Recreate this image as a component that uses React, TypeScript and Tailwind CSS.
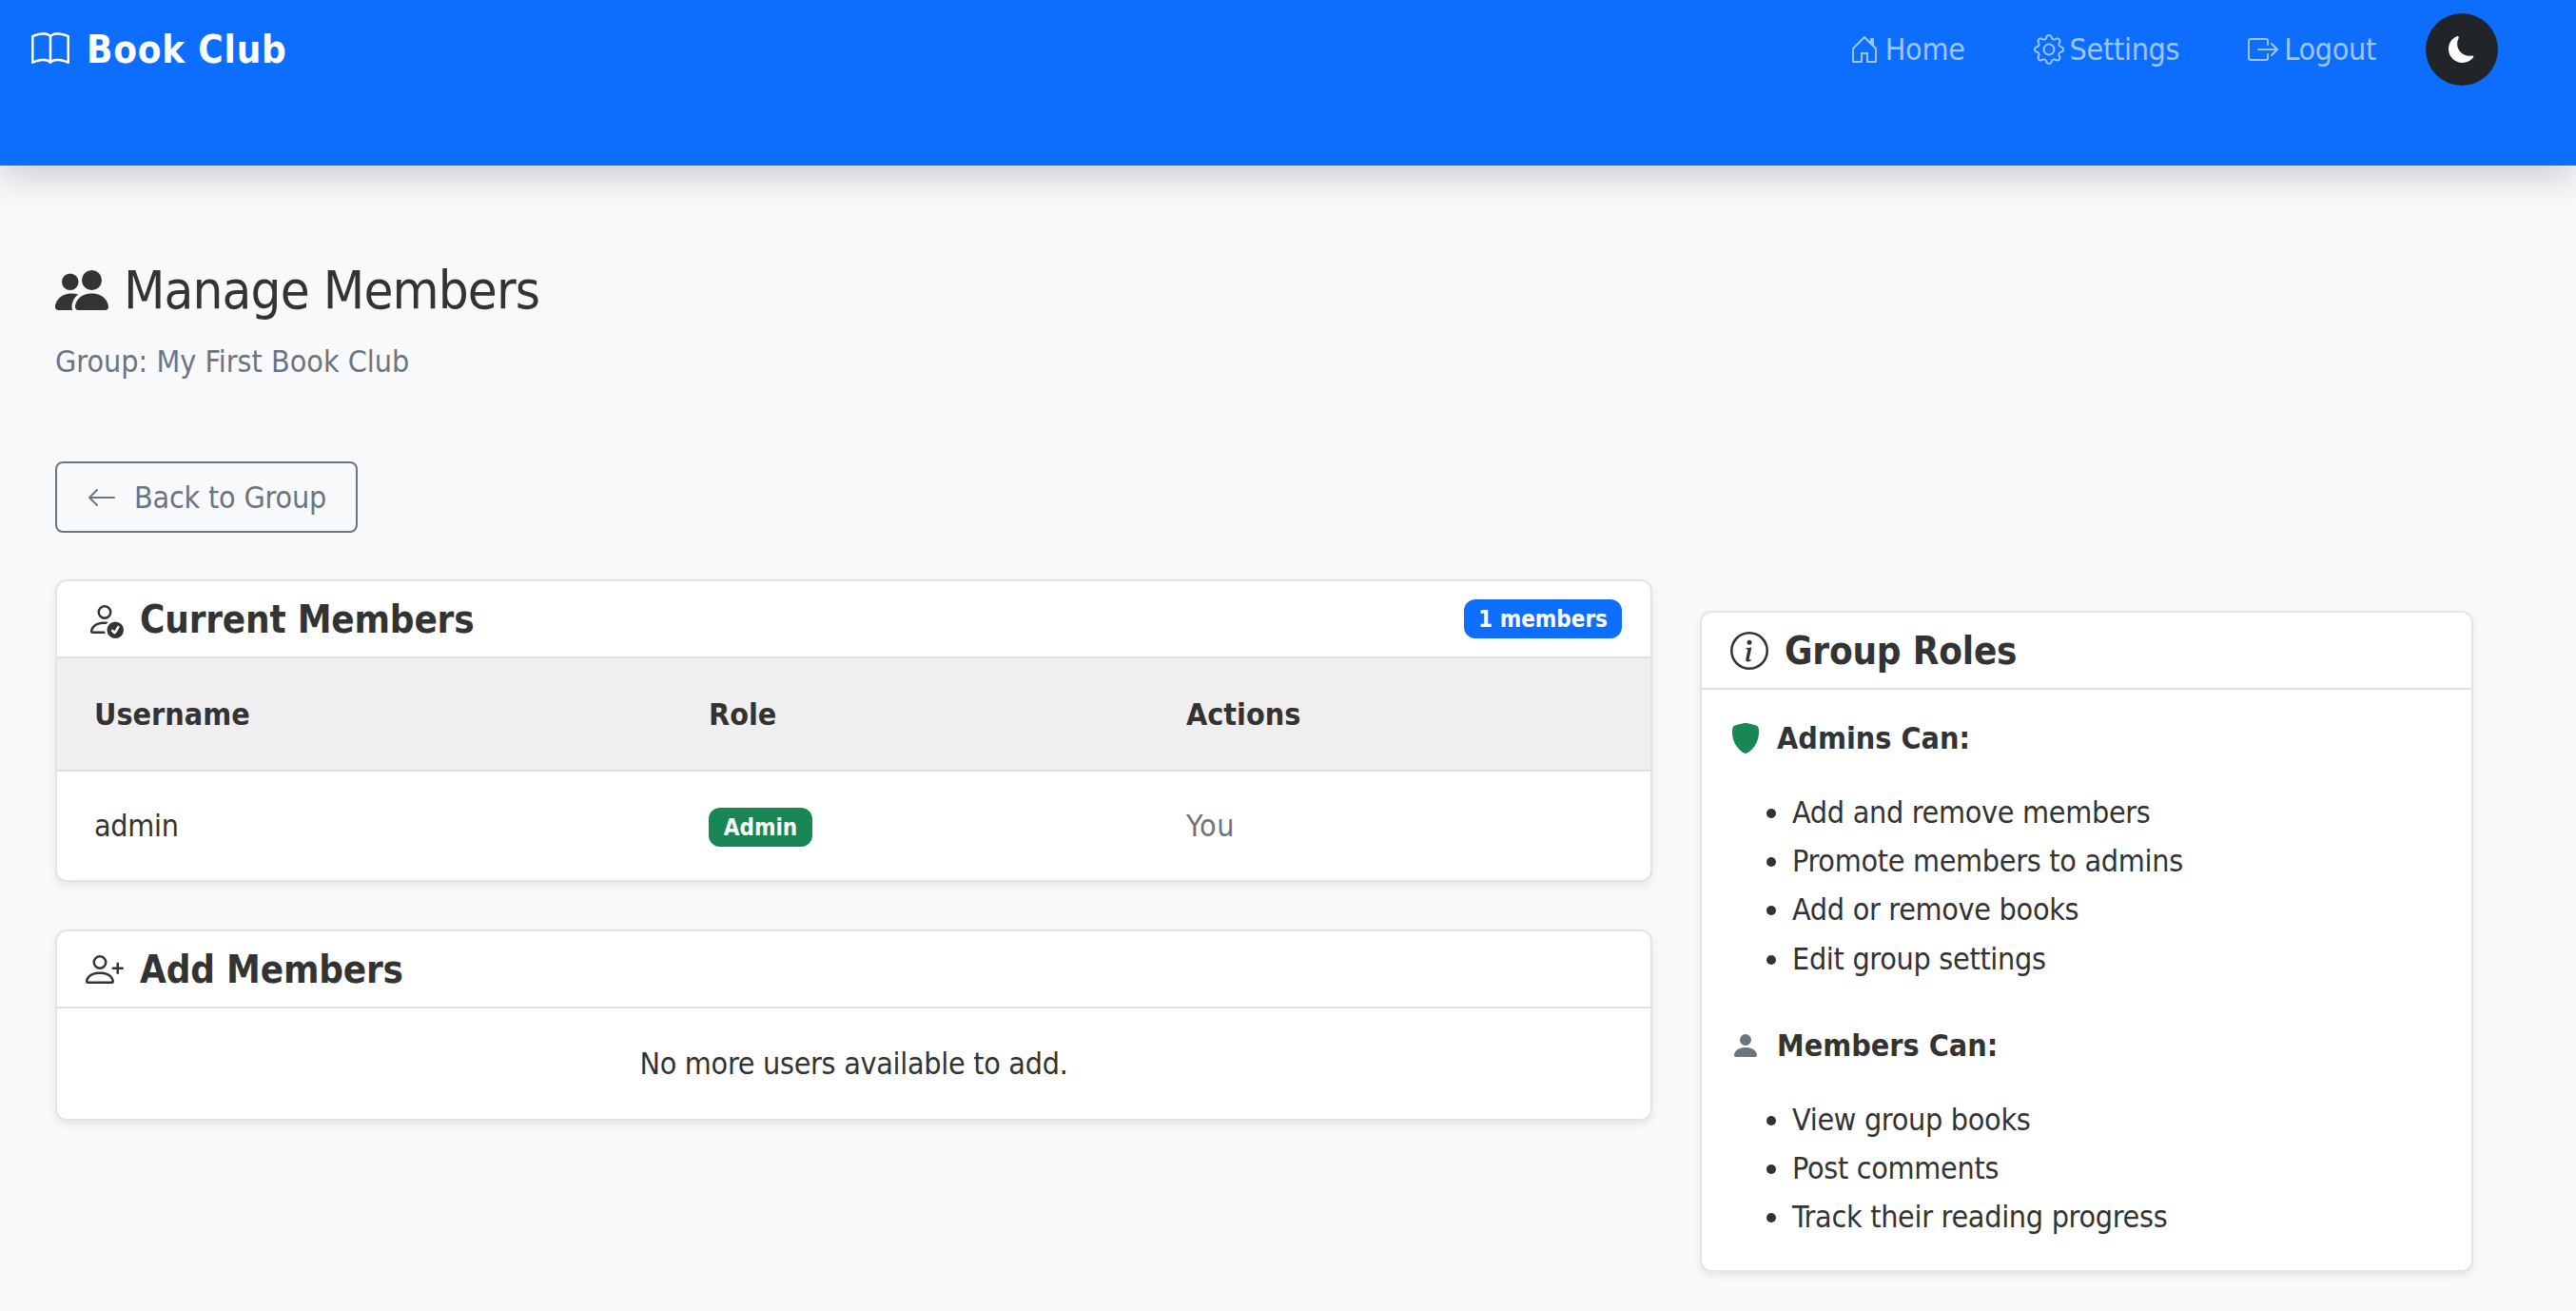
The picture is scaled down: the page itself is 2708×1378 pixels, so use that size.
import { BsArrowLeft, BsBook, BsBoxArrowRight, BsGear, BsHouseDoor, BsInfoCircle, BsMoonFill, BsPeopleFill, BsPersonCheck, BsPersonFill, BsPersonPlus, BsShieldFill } from 'react-icons/bs';
import type { ReactNode } from 'react';

const FONT = "font-['DejaVu_Sans','Liberation_Sans',sans-serif] [font-stretch:condensed]";

const NAV_LINKS = [
  { label: 'Home', icon: <BsHouseDoor className="size-[32px]" /> },
  { label: 'Settings', icon: <BsGear className="size-[32px]" /> },
  { label: 'Logout', icon: <BsBoxArrowRight className="size-[32px]" /> },
];

const ADMIN_RIGHTS = ['Add and remove members', 'Promote members to admins', 'Add or remove books', 'Edit group settings'];
const MEMBER_RIGHTS = ['View group books', 'Post comments', 'Track their reading progress'];

function Card({ icon, title, badge, children }: { icon: ReactNode; title: string; badge?: string; children: ReactNode }) {
  return (
    <div className="overflow-hidden rounded-[12px] border-2 border-[#e3e4e5] bg-white shadow-[0_4px_8px_rgba(0,0,0,0.075)]">
      <div className="flex h-[81px] items-center justify-between border-b-2 border-[#dfe0e1] px-[30px]">
        <div className="flex items-center gap-[17px]">
          {icon}
          <h5 className="text-[40px] font-bold leading-none tracking-[-0.2px] text-[#333]">{title}</h5>
        </div>
        {badge && (
          <span className="flex h-[41px] w-[166px] items-center justify-center rounded-[12px] bg-[#0d6efd] text-[24px] font-bold text-white">{badge}</span>
        )}
      </div>
      {children}
    </div>
  );
}

function RoleList({ items }: { items: string[] }) {
  return (
    <ul className="list-disc pl-[65px] text-[32px] leading-[51.2px] tracking-[-0.3px] text-[#333] marker:text-[#333]">
      {items.map((item) => (
        <li key={item}>{item}</li>
      ))}
    </ul>
  );
}

export default function App() {
  return (
    <div className={`${FONT} min-h-[1378px] bg-[#f8f9fa] text-[#333]`}>
      <nav className="flex h-[174px] items-start justify-between bg-[#0d6efd] pl-[33px] pr-[82px] pt-[14px] shadow-[0_16px_32px_rgba(0,0,0,0.15)]">
        <div className="flex h-[76px] items-center gap-[18px] text-white">
          <BsBook className="size-[40px]" />
          <span className="text-[40px] font-bold leading-none tracking-[0.8px]">Book Club</span>
        </div>
        <div className="flex items-center gap-[52px]">
          <div className="flex items-center gap-[72px] text-[32px] tracking-[-0.3px] text-[#9ec5fe]">
            {NAV_LINKS.map((link) => (
              <a key={link.label} className="flex items-center gap-[6px]">
                {link.icon}
                {link.label}
              </a>
            ))}
          </div>
          <button className="flex size-[76px] items-center justify-center rounded-full bg-[#212529] text-white">
            <BsMoonFill className="size-[28px]" />
          </button>
        </div>
      </nav>

      <main className="px-[58px] pt-[96px]">
        <h1 className="flex h-[70px] items-center gap-[16px] text-[56px] font-normal leading-none tracking-[-0.9px] text-[#333]">
          <BsPeopleFill className="size-[56px]" />
          Manage Members
        </h1>
        <p className="mt-[15px] text-[32px] leading-[51px] text-[#6c757d]">Group: My First Book Club</p>

        <a className="mt-[79px] flex h-[75px] w-[318px] items-center justify-center gap-[18px] rounded-[8px] border-2 border-[#6c757d] text-[32px] tracking-[-0.2px] text-[#6c757d]">
          <BsArrowLeft className="size-[32px]" />
          Back to Group
        </a>

        <div className="mt-[49px] grid grid-cols-[1679px_813px] gap-[50px]">
          <div className="flex flex-col gap-[50px]">
            <Card icon={<BsPersonCheck className="size-[40px]" />} title="Current Members" badge="1 members">
              <table className="w-full table-fixed text-left text-[32px]">
                <thead>
                  <tr className="h-[118px] border-b-2 border-[#dee2e6] bg-[#efefef]">
                    <th className="w-[645px] pl-[39px] font-bold">Username</th>
                    <th className="w-[502px] pl-[40px] font-bold">Role</th>
                    <th className="pl-[40px] font-bold">Actions</th>
                  </tr>
                </thead>
                <tbody>
                  <tr className="h-[115px]">
                    <td className="pl-[39px] tracking-[-0.3px]">admin</td>
                    <td className="pl-[40px]">
                      <span className="mt-[2px] flex h-[41px] w-[109px] items-center justify-center rounded-[12px] bg-[#198754] pt-[2px] text-[24px] font-bold text-white">Admin</span>
                    </td>
                    <td className="pl-[40px] tracking-[0.6px] text-[#6c757d]">You</td>
                  </tr>
                </tbody>
              </table>
            </Card>

            <Card icon={<BsPersonPlus className="size-[40px]" />} title="Add Members">
              <p className="flex h-[116px] items-center justify-center text-[32px] tracking-[-0.3px]">No more users available to add.</p>
            </Card>
          </div>

          <div className="mt-[33px]">
            <Card icon={<BsInfoCircle className="size-[40px]" />} title="Group Roles">
              <div className="px-[30px] pb-[30px] pt-[32px]">
                <h6 className="flex items-center gap-[17px] text-[32px] font-bold leading-[38px]">
                  <BsShieldFill className="size-[32px] text-[#198754]" />
                  Admins Can:
                </h6>
                <div className="mt-[34px]">
                  <RoleList items={ADMIN_RIGHTS} />
                </div>
                <h6 className="mt-[46px] flex items-center gap-[17px] text-[32px] font-bold leading-[38px]">
                  <BsPersonFill className="size-[32px] text-[#6c757d]" />
                  Members Can:
                </h6>
                <div className="mt-[34px]">
                  <RoleList items={MEMBER_RIGHTS} />
                </div>
              </div>
            </Card>
          </div>
        </div>
      </main>
    </div>
  );
}
